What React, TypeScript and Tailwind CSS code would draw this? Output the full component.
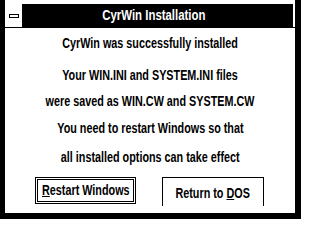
import React from "react";

const font = { fontFamily: '"Liberation Sans", Arial, sans-serif' };

const Squeeze = ({ children }: { children: React.ReactNode }) => (
  <span className="inline-block whitespace-nowrap scale-x-[0.72]">{children}</span>
);

const Line = ({ children, className = "" }: { children: React.ReactNode; className?: string }) => (
  <div className={`flex justify-center text-[15px] leading-[15px] font-bold text-black whitespace-nowrap ${className}`}>
    <Squeeze>{children}</Squeeze>
  </div>
);

export default function App() {
  return (
    <div className="w-[301px] h-[225px] bg-white overflow-hidden" style={font}>
      <div className="h-[219px] flex flex-col pt-[4px] border-l-[5px] border-r-[6px] border-b-[6px] border-black">
        {/* title bar */}
        <div className="flex h-[23px]">
          <div className="w-[17px] flex items-center justify-center bg-white">
            <span className="block w-[10px] h-[4px] border border-black" />
          </div>
          <div className="flex-1 mr-[2px] bg-black flex items-center justify-center pr-[8px] text-white text-[15px] font-bold">
            <span className="inline-block whitespace-nowrap scale-x-[0.76]">CyrWin Installation</span>
          </div>
        </div>
        <div className="h-px bg-black" />

        {/* message */}
        <Line className="mt-[7px]">CyrWin was successfully installed</Line>
        <Line className="mt-[17px]">Your WIN.INI and SYSTEM.INI files</Line>
        <Line className="mt-[11px]">were saved as WIN.CW and SYSTEM.CW</Line>
        <Line className="mt-[12px]">You need to restart Windows so that</Line>
        <Line className="mt-[14px]">all installed options can take effect</Line>

        {/* buttons */}
        <div className="flex mt-[13px] pl-[30px] gap-[26px]">
          <div className="w-[101px] h-[27px] border border-black p-px">
            <div className="h-full border border-black flex items-center justify-center text-[15px] font-bold">
              <Squeeze>
                <span className="underline">R</span>estart Windows
              </Squeeze>
            </div>
          </div>
          <div className="w-[102px] h-[29px] border-t border-l border-r border-black flex items-center justify-center text-[15px] font-bold pt-[2px]">
            <Squeeze>
              Return to <span className="underline">D</span>OS
            </Squeeze>
          </div>
        </div>
      </div>
    </div>
  );
}
